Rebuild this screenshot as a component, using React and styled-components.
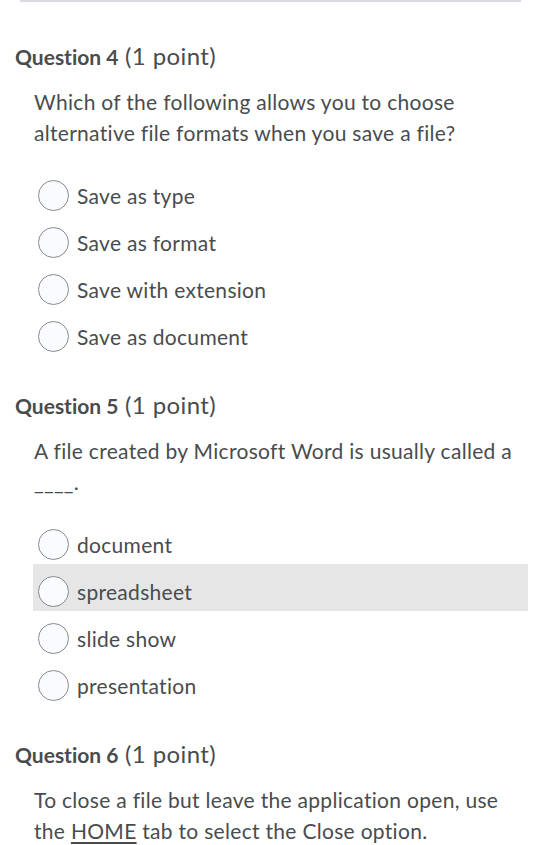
import React from "react";
import styled, { createGlobalStyle } from "styled-components";

const GlobalStyle = createGlobalStyle`
  html, body {
    margin: 0;
    padding: 0;
    background: #fff;
  }
  body {
    font-family: Lato, "Noto Sans", sans-serif;
    font-variant-ligatures: none;
    color: #494c4e;
  }
`;

const Page = styled.div`
  width: 540px;
  padding-bottom: 20px;
`;

const Rule = styled.div`
  margin: 0 19px 0 20px;
  height: 2px;
  background: #d8dce1;
`;

const Question = styled.section`
  display: flex;
  flex-direction: column;
  padding-top: ${(p) => p.$top || 0}px;
`;

const Heading = styled.h2`
  margin: 0 0 14.5px 15px;
  height: 30px;
  line-height: 30px;
  font-weight: 400;
  font-size: 24px;
  letter-spacing: 0.4px;
  color: #494c4e;
  b {
    font-weight: 700;
    font-size: 21px;
    letter-spacing: 0;
  }
`;

const Prompt = styled.p`
  margin: 0 0 20px 34px;
  padding-right: 8px;
  font-size: 21px;
  letter-spacing: 0.3px;
  line-height: 31px;
  u {
    text-decoration-thickness: 1.5px;
    text-underline-offset: 3px;
  }
`;

const Options = styled.div`
  display: flex;
  flex-direction: column;
  margin: 0 12px 34.5px 33px;
`;

const Option = styled.label`
  box-sizing: border-box;
  display: flex;
  align-items: center;
  gap: 8px;
  height: 47px;
  padding: 8px 0 0 5px;
  font-size: 21px;
  letter-spacing: 0.3px;
  background: ${(p) => (p.$hover ? "#e6e6e6" : "transparent")};
`;

const Radio = styled.span`
  box-sizing: border-box;
  width: 31px;
  height: 31px;
  border-radius: 50%;
  border: 1.5px solid #878b8e;
  background: #f9fbff;
  flex: none;
`;

const questions = [
  {
    n: 4,
    top: 39,
    text: "Which of the following allows you to choose alternative file formats when you save a file?",
    options: ["Save as type", "Save as format", "Save with extension", "Save as document"],
  },
  {
    n: 5,
    text: (
      <>
        A file created by Microsoft Word is usually called a <br />
        ____.
      </>
    ),
    options: ["document", "spreadsheet", "slide show", "presentation"],
    hover: 1,
  },
  {
    n: 6,
    text: (
      <>
        To close a file but leave the application open, use the <u>HOME</u> tab to select the Close option.
      </>
    ),
    options: [],
  },
];

export default function App() {
  return (
    <Page>
      <GlobalStyle />
      <Rule />
      {questions.map((q) => (
        <Question key={q.n} $top={q.top}>
          <Heading>
            <b>Question {q.n}</b> (1 point)
          </Heading>
          <Prompt>{q.text}</Prompt>
          {q.options.length > 0 && (
            <Options>
              {q.options.map((o, i) => (
                <Option key={o} $hover={q.hover === i}>
                  <Radio />
                  {o}
                </Option>
              ))}
            </Options>
          )}
        </Question>
      ))}
    </Page>
  );
}
